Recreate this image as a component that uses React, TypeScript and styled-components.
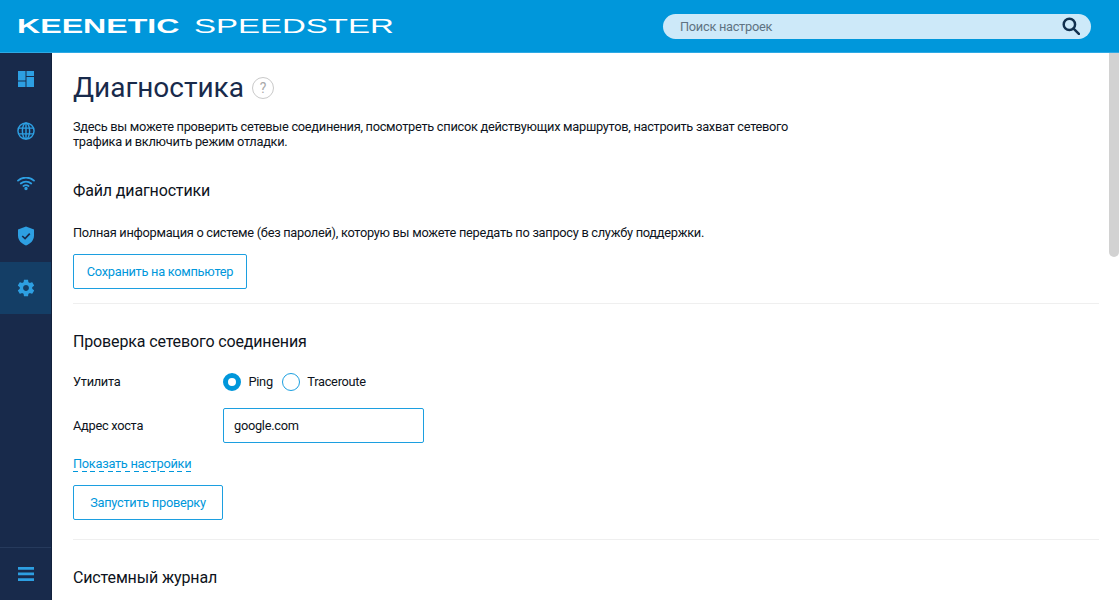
import React from "react";
import styled, { createGlobalStyle } from "styled-components";

const Global = createGlobalStyle`
  html, body { margin: 0; padding: 0; height: 100%; overflow: hidden; background: #fff; }
  body { font-family: Roboto, "Liberation Sans", sans-serif; color: #0d1320; }
  * { box-sizing: border-box; }
`;

const Page = styled.div`
  width: 1119px; height: 600px; display: flex; flex-direction: column; position: relative; overflow: hidden;
`;
const Header = styled.header`
  height: 53px; flex: none; background: #0097db; border-bottom: 1px solid #2ea9e4;
  display: flex; align-items: center; justify-content: space-between; padding: 0 28px 0 17px;
`;
const Logo = styled.div`
  display: flex; align-items: center; gap: 16px; color: #fff; height: 20px;
  font-family: "Liberation Sans", Arial, sans-serif; white-space: nowrap;
`;
const LogoWord = styled.span<{ $w: number; $scale: number; $bold?: boolean }>`
  display: block; width: ${p => p.$w}px; font-size: 21px; line-height: 20px; font-weight: ${p => p.$bold ? 700 : 400};
  transform-origin: left center; transform: scaleX(${p => p.$scale});
`;
const Search = styled.div`
  width: 428px; height: 25px; border-radius: 13px; background: #cde9f9; display: flex; align-items: center;
  justify-content: space-between; padding: 0 11px 0 17px; color: #5f7383; font-size: 12.8px; letter-spacing: -.28px;
`;
const Body = styled.div`
  flex: 1; display: flex; min-height: 0;
`;
const Sidebar = styled.nav`
  width: 52px; flex: none; background: #182a4b; border-right: 1px solid #12213d; display: flex; flex-direction: column;
`;
const NavItem = styled.div<{ $active?: boolean }>`
  height: 52.25px; display: flex; align-items: center; justify-content: center; color: #2d9fe2;
  background: ${p => p.$active ? "#143e66" : "transparent"};
`;
const NavBottom = styled.div`
  margin-top: auto; height: 53px; border-top: 1px solid #263a5c; display: flex; align-items: center; justify-content: center; color: #2d9fe2;
`;
const Main = styled.main`
  flex: 1; padding: 0 20px 0 21px; overflow: hidden; min-width: 0; font-size: 12.8px; letter-spacing: -.28px;
`;
const Thumb = styled.div`
  position: absolute; right: 0; top: 53px; width: 10px; height: 204px; background: #d2d2d2; border-radius: 0 0 5px 5px;
`;
const TitleRow = styled.div`
  display: flex; align-items: center; gap: 8px; height: 36px; margin-top: 17px;
`;
const Title = styled.h1`
  margin: 0; font-size: 28px; font-weight: 400; line-height: 36px; color: #182a4b; letter-spacing: 0;
`;
const Help = styled.span`
  width: 22px; height: 22px; border-radius: 50%; border: 1.500px solid #c9c9c9; color: #a9a9a9; font-size: 14px; letter-spacing: 0;
  display: flex; align-items: center; justify-content: center;
`;
const Lead = styled.p`
  margin: 13px 0 0; line-height: 15px; width: 730px;
`;
const SectionTitle = styled.h2<{ $mt: number }>`
  margin: ${p => p.$mt}px 0 0; font-size: 16px; line-height: 22px; font-weight: 400; color: #0d1320; letter-spacing: -.14px;
`;
const Para = styled.p`
  margin: 22px 0 0; line-height: 18px;
`;
const OutlineButton = styled.button<{ $w: number; $mt: number }>`
  display: block; width: ${p => p.$w}px; height: 35px; margin-top: ${p => p.$mt}px; background: #fff;
  border: 1px solid #1c9fe0; border-radius: 2px; color: #0097db; font: 400 12.8px Roboto, sans-serif; letter-spacing: -.28px; padding: 0;
`;
const Divider = styled.hr<{ $mt: number }>`
  margin: ${p => p.$mt}px 0 0; border: 0; border-top: 1px solid #efefef;
`;
const FormRow = styled.div<{ $mt: number; $h: number }>`
  display: flex; align-items: center; height: ${p => p.$h}px; margin-top: ${p => p.$mt}px;
`;
const FieldLabel = styled.div`
  width: 150px; flex: none; margin-top: -2px;
`;
const HostLabel = styled(FieldLabel)`
  margin-top: -1px;
`;
const Radio = styled.span<{ $on?: boolean }>`
  width: 18px; height: 18px; border-radius: 50%; flex: none;
  border: ${p => p.$on ? "5.500px solid #0097db" : "1px solid #1c9fe0"}; background: #fff;
`;
const RadioLabel = styled.span`
  margin: -2px 9px 0 7.500px;
`;
const TextInput = styled.div`
  width: 201px; height: 35px; border: 1px solid #1c9fe0; border-radius: 2px; padding: 0 10px; display: flex; align-items: center;
`;
const LinkRow = styled.div`
  margin-top: 12px; height: 17px;
`;
const DashLink = styled.a`
  display: inline-block; color: #0097db; line-height: 18px; height: 17px;
  background: repeating-linear-gradient(to right, #0097db 0 5px, transparent 5px 8.700px) left bottom / 100% 1px no-repeat;
`;

const Dash = () => (
  <svg width="16" height="16" viewBox="0 0 16 16" fill="currentColor"><path d="M0 0h7.500v9.500H0zM8.500 0H16v5H8.500zM8.500 6H16v10H8.500zM0 10.500h7.500V16H0z"/></svg>
);
const Globe = () => (
  <svg width="18" height="18" viewBox="0 0 19 19" fill="none" stroke="currentColor" strokeWidth="1.500"><circle cx="9.500" cy="9.500" r="8.500"/><ellipse cx="9.500" cy="9.500" rx="3.800" ry="8.500"/><path d="M9.500 1v17M1.800 6.500h15.400M1.800 12.500h15.400"/></svg>
);
const Wifi = () => (
  <svg width="18" height="14" viewBox="0 1 18 14" fill="none" stroke="currentColor" strokeWidth="1.800" strokeLinecap="round"><path d="M1 4.600C5.500.6 12.500.6 17 4.600M3.800 7.500c3-2.500 7.400-2.500 10.400 0M6.500 10c1.500-1 3.500-1 5 0"/><circle cx="9" cy="12.500" r=".8" fill="currentColor"/></svg>
);
const Shield = () => (
  <svg width="16" height="20" viewBox="0 0 17 20"><path fill="currentColor" d="M8.500 0L17 3v6.500c0 5-3.600 8.900-8.500 10.500C3.600 18.400 0 14.500 0 9.500V3z"/><path fill="none" stroke="#182a4b" strokeWidth="1.800" d="M4.500 10l3 2.800 5-5.300"/></svg>
);
const Gear = () => (
  <svg width="20" height="20" viewBox="0 0 24 24" fill="currentColor"><path fillRule="evenodd" d="M19.430 12.980c.04-.32.07-.64.070-.98s-.03-.66-.07-.98l2.110-1.650c.19-.15.240-.42.120-.640l-2-3.460c-.120-.220-.390-.300-.610-.220l-2.490 1c-.520-.400-1.080-.730-1.690-.980l-.380-2.650C14.460 2.180 14.250 2 14 2h-4c-.250 0-.460.180-.490.420l-.380 2.650c-.610.250-1.170.590-1.690.980l-2.490-1c-.230-.090-.490 0-.610.220l-2 3.460c-.130.220-.070.490.120.640l2.110 1.650c-.040.320-.070.650-.070.980s.03.660.07.980l-2.110 1.650c-.190.150-.240.420-.120.640l2 3.460c.120.220.390.300.610.220l2.490-1c.520.400 1.080.730 1.690.980l.380 2.650c.030.240.240.420.490.420h4c.250 0 .460-.180.490-.420l.380-2.650c.610-.250 1.170-.590 1.690-.980l2.490 1c.230.090.490 0 .610-.220l2-3.460c.120-.220.070-.490-.120-.640l-2.110-1.650zM12 15.500c-1.930 0-3.500-1.570-3.500-3.500s1.570-3.500 3.500-3.500 3.500 1.570 3.500 3.500-1.570 3.500-3.500 3.500z"/></svg>
);
const Burger = () => (
  <svg width="16" height="14" viewBox="0 0 16 14" fill="currentColor"><path d="M0 0h16v2.700H0zM0 5.600h16v2.700H0zM0 11.200h16v2.700H0z"/></svg>
);
const SearchIcon = () => (
  <svg width="18" height="18" viewBox="0 0 19 19" fill="none" stroke="#12314f" strokeWidth="2.600"><circle cx="7.800" cy="7.800" r="6"/><path d="M12.200 12.200l5.600 5.600" strokeLinecap="round"/></svg>
);

export default function App() {
  return (
    <Page>
      <Global />
      <Header>
        <Logo>
          <LogoWord $w={161} $scale={1.53} $bold>KEENETIC</LogoWord>
          <LogoWord $w={198} $scale={1.57}>SPEEDSTER</LogoWord>
        </Logo>
        <Search>Поиск настроек<SearchIcon /></Search>
      </Header>
      <Body>
        <Sidebar>
          <NavItem><Dash /></NavItem>
          <NavItem><Globe /></NavItem>
          <NavItem><Wifi /></NavItem>
          <NavItem><Shield /></NavItem>
          <NavItem $active><Gear /></NavItem>
          <NavBottom><Burger /></NavBottom>
        </Sidebar>
        <Main>
          <TitleRow><Title>Диагностика</Title><Help>?</Help></TitleRow>
          <Lead>Здесь вы можете проверить сетевые соединения, посмотреть список действующих маршрутов, настроить захват сетевого трафика и включить режим отладки.</Lead>
          <SectionTitle $mt={31}>Файл диагностики</SectionTitle>
          <Para>Полная информация о системе (без паролей), которую вы можете передать по запросу в службу поддержки.</Para>
          <OutlineButton $w={174} $mt={12}>Сохранить на компьютер</OutlineButton>
          <Divider $mt={14} />
          <SectionTitle $mt={27}>Проверка сетевого соединения</SectionTitle>
          <FormRow $mt={17} $h={24}>
            <FieldLabel>Утилита</FieldLabel>
            <Radio $on /><RadioLabel>Ping</RadioLabel>
            <Radio /><RadioLabel>Traceroute</RadioLabel>
          </FormRow>
          <FormRow $mt={14} $h={35}>
            <HostLabel>Адрес хоста</HostLabel>
            <TextInput>google.com</TextInput>
          </FormRow>
          <LinkRow><DashLink>Показать настройки</DashLink></LinkRow>
          <OutlineButton $w={150} $mt={13}>Запустить проверку</OutlineButton>
          <Divider $mt={19} />
          <SectionTitle $mt={27}>Системный журнал</SectionTitle>
        </Main>
      </Body>
      <Thumb />
    </Page>
  );
}
